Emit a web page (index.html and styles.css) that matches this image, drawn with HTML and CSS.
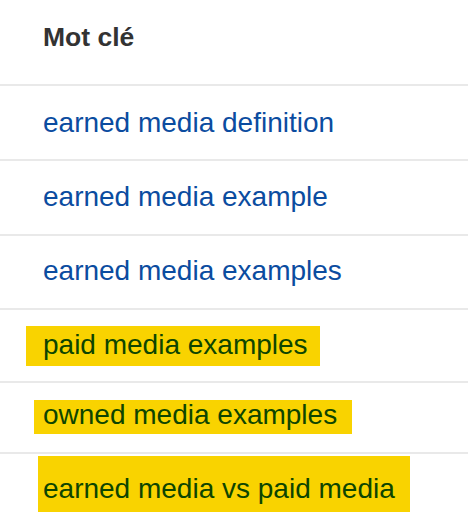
FILE: index.html
```html
<!DOCTYPE html>
<html lang="fr">
<head>
<meta charset="utf-8">
<title>Mot clé</title>
<link rel="stylesheet" href="styles.css">
</head>
<body>
<div class="table">
  <div class="row head"><span class="th">Mot clé</span></div>
  <div class="row r1"><span class="kw">earned media definition</span></div>
  <div class="row r2"><span class="kw">earned media example</span></div>
  <div class="row r3"><span class="kw">earned media examples</span></div>
  <div class="row r4"><span class="kw hl">paid media examples</span></div>
  <div class="row r5"><span class="kw hl">owned media examples</span></div>
  <div class="row r6"><span class="kw hl">earned media vs paid media</span></div>
</div>
</body>
</html>
```
FILE: styles.css
```css
html, body {
  margin: 0;
  padding: 0;
  background: #ffffff;
}
body {
  font-family: "Liberation Sans", Arial, Helvetica, sans-serif;
  overflow: hidden;
}
.table {
  display: flex;
  flex-direction: column;
}
.row {
  box-sizing: content-box;
  padding-left: 43px;
  border-bottom: 2px solid #e9e9e9;
  white-space: nowrap;
}
.row:last-child {
  border-bottom: none;
}
.th {
  display: inline-block;
  font-weight: bold;
  font-size: 26.5px;
  line-height: 32px;
  color: #333333;
}
.kw {
  display: inline-block;
  font-size: 28px;
  line-height: 32px;
  color: #0b4ca0;
}
.hl {
  background: #f9d300;
  color: #0d4500;
  line-height: 28px;
}
.head { height: 63px; padding-top: 21px; }
.r1 { height: 52px; padding-top: 21px; }
.r2 { height: 53px; padding-top: 20px; }
.r3 { height: 53px; padding-top: 19px; }
.r4 { height: 55px; padding-top: 16px; }
.r4 .hl { padding: 5px 12px 7px 17px; margin-left: -17px; }
.r5 { height: 52px; padding-top: 17px; }
.r5 .hl { padding: 1px 15px 5px 9px; margin-left: -9px; }
.r6 { height: 68px; padding-top: 2px; }
.r6 .hl { padding: 19px 15px 9px 5px; margin-left: -5px; }
```
